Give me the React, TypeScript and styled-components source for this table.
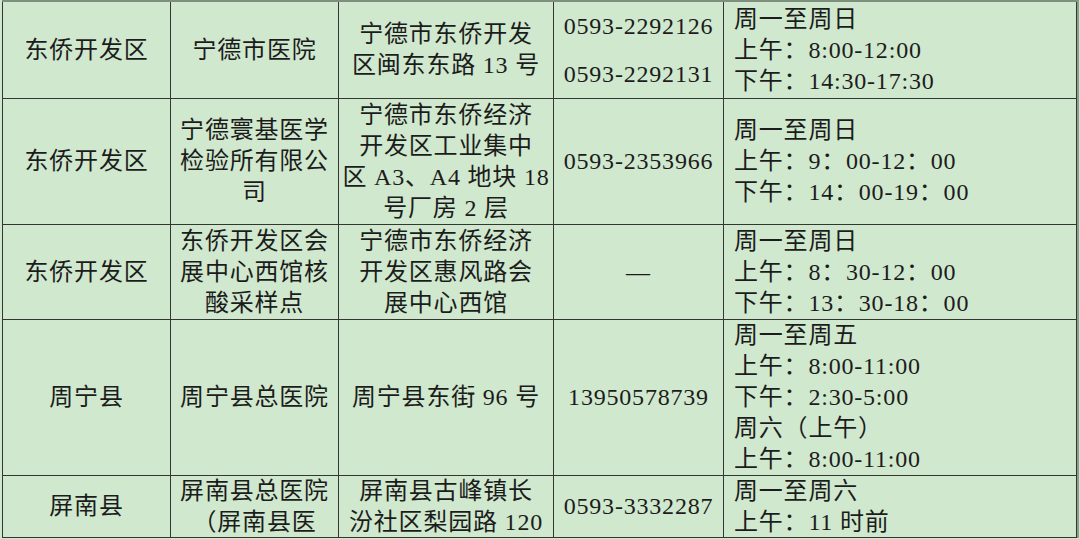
import React from "react";
import styled, { createGlobalStyle } from "styled-components";

const GlobalStyle = createGlobalStyle`
  html, body {
    margin: 0;
    padding: 0;
    background: #d0e8ce;
  }
  body {
    width: 1080px;
    height: 539px;
    overflow: hidden;
    font-family: "Liberation Serif", "Noto Sans CJK SC", serif;
    color: #1c1c1c;
  }
`;

type Align = "center" | "left";

interface CellData {
  lines: string[];
  lh?: number;
}

interface RowData {
  height: number;
  cells: CellData[];
}

const columns = [167, 167, 214, 169, 352];
const aligns: Align[] = ["center", "center", "center", "center", "left"];

// the last row is cut by the bottom of the screenshot
const rows: RowData[] = [
  {
    height: 96,
    cells: [
      { lines: ["东侨开发区"] },
      { lines: ["宁德市医院"] },
      { lines: ["宁德市东侨开发", "区闽东东路 13 号"] },
      { lines: ["0593-2292126", "0593-2292131"], lh: 48 },
      { lines: ["周一至周日", "上午：8:00-12:00", "下午：14:30-17:30"] },
    ],
  },
  {
    height: 125,
    cells: [
      { lines: ["东侨开发区"] },
      { lines: ["宁德寰基医学", "检验所有限公", "司"] },
      { lines: ["宁德市东侨经济", "开发区工业集中", "区 A3、A4 地块 18", "号厂房 2 层"] },
      { lines: ["0593-2353966"] },
      { lines: ["周一至周日", "上午：9：00-12：00", "下午：14：00-19：00"] },
    ],
  },
  {
    height: 94,
    cells: [
      { lines: ["东侨开发区"] },
      { lines: ["东侨开发区会", "展中心西馆核", "酸采样点"] },
      { lines: ["宁德市东侨经济", "开发区惠风路会", "展中心西馆"] },
      { lines: ["—"] },
      { lines: ["周一至周日", "上午：8：30-12：00", "下午：13：30-18：00"] },
    ],
  },
  {
    height: 155,
    cells: [
      { lines: ["周宁县"] },
      { lines: ["周宁县总医院"] },
      { lines: ["周宁县东街 96 号"] },
      { lines: ["13950578739"] },
      {
        lines: [
          "周一至周五",
          "上午：8:00-11:00",
          "下午：2:30-5:00",
          "周六（上午）",
          "上午：8:00-11:00",
        ],
      },
    ],
  },
  {
    height: 61,
    cells: [
      { lines: ["屏南县"] },
      { lines: ["屏南县总医院", "（屏南县医"] },
      { lines: ["屏南县古峰镇长", "汾社区梨园路 120"] },
      { lines: ["0593-3332287"] },
      { lines: ["周一至周六", "上午：11 时前"] },
    ],
  },
];

const Sheet = styled.div`
  margin-left: 2px;
  width: 1075px;
  border-top: 2px solid #7f8f7d;
  box-shadow: 2px 0 0 #8c9c8a;
`;

const Grid = styled.div<{ $cols: string; $rows: string }>`
  display: grid;
  grid-template-columns: ${(p) => p.$cols};
  grid-template-rows: ${(p) => p.$rows};
  gap: 1px;
  padding: 0 1px 1px 1px;
  background: #333631;
`;

const Cell = styled.div<{ $align: Align }>`
  display: flex;
  flex-direction: column;
  align-items: ${(p) => (p.$align === "left" ? "flex-start" : "center")};
  padding-left: ${(p) => (p.$align === "left" ? "10px" : "0")};
  background: #d0e8ce;
  overflow: hidden;
`;

const CellText = styled.div<{ $lh: number; $align: Align }>`
  margin: auto 0;
  font-size: 24px;
  line-height: ${(p) => p.$lh}px;
  letter-spacing: 0.8px;
  white-space: nowrap;
  text-align: ${(p) => p.$align};
`;

export default function App() {
  return (
    <>
      <GlobalStyle />
      <Sheet>
        <Grid
          $cols={columns.map((c) => `${c}px`).join(" ")}
          $rows={rows.map((r) => `${r.height}px`).join(" ")}
        >
          {rows.map((row, ri) =>
            row.cells.map((cell, ci) => (
              <Cell key={`${ri}-${ci}`} $align={aligns[ci]}>
                <CellText $lh={cell.lh ?? 31} $align={aligns[ci]}>
                  {cell.lines.map((line, li) => (
                    <div key={li}>{line}</div>
                  ))}
                </CellText>
              </Cell>
            ))
          )}
        </Grid>
      </Sheet>
    </>
  );
}
